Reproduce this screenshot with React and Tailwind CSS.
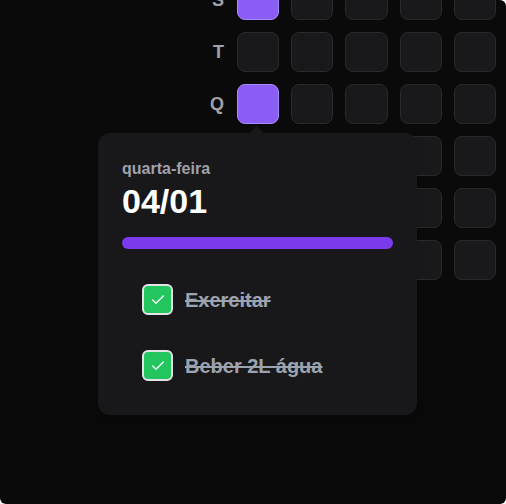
import { Check } from "lucide-react";

const rows = [
  { label: "S", cells: [true, false, false, false, false] },
  { label: "T", cells: [false, false, false, false, false] },
  { label: "Q", cells: [true, false, false, false, false] },
  { label: "Q", cells: [false, false, false, false, false] },
  { label: "S", cells: [false, false, false, false, false] },
  { label: "S", cells: [false, false, false, false, false] },
];

const tasks = ["Exercitar", "Beber 2L água"];

export default function App() {
  return (
    <div
      className="relative w-[506px] h-[504px] overflow-hidden bg-[#0a0a0a] rounded-tr-md rounded-b-md"
      style={{ fontFamily: '"Liberation Sans", Arial, sans-serif' }}
    >
      <div className="flex flex-col gap-3 mt-[-20px] pl-[200px]">
        {rows.map((row, i) => (
          <div key={i} className="flex items-center gap-[13px]">
            <span className="w-6 text-right text-lg font-bold text-[#a1a1aa]">
              {row.label}
            </span>
            <div className="grid grid-cols-5 gap-3 w-[259px]">
              {row.cells.map((done, j) => (
                <div
                  key={j}
                  className={
                    done
                      ? "h-10 rounded-lg bg-[#8b5cf6] border border-[#a78bfa]"
                      : "h-10 rounded-lg bg-[#19191b] border border-[#2a2a2d]"
                  }
                />
              ))}
            </div>
          </div>
        ))}
      </div>

      {/* popover over the grid */}
      <div className="absolute left-[98px] top-[133px] w-[319px] h-[282px] rounded-xl bg-[#18181b] p-6 shadow-lg">
        <div className="absolute -top-[5px] left-[153px] w-[11px] h-[11px] rotate-45 bg-[#18181b]" />
        <p className="text-base leading-6 font-bold text-[#a1a1aa]">quarta-feira</p>
        <h2 className="text-[34px] leading-10 font-bold text-white">04/01</h2>
        <div className="mt-4 h-3 w-full rounded-full bg-[#7c3aed]" />
        <ul className="mt-[35px] flex flex-col gap-[35px] pl-5">
          {tasks.map((t) => (
            <li key={t} className="flex items-center gap-3 h-[31px]">
              <span className="flex items-center justify-center w-[31px] h-[31px] rounded-md bg-[#22c55e] border-2 border-[#e4e4e7]">
                <Check size={16} strokeWidth={2} className="text-white" />
              </span>
              <span className="text-xl font-bold text-[#9ca3af] line-through">{t}</span>
            </li>
          ))}
        </ul>
      </div>
    </div>
  );
}
